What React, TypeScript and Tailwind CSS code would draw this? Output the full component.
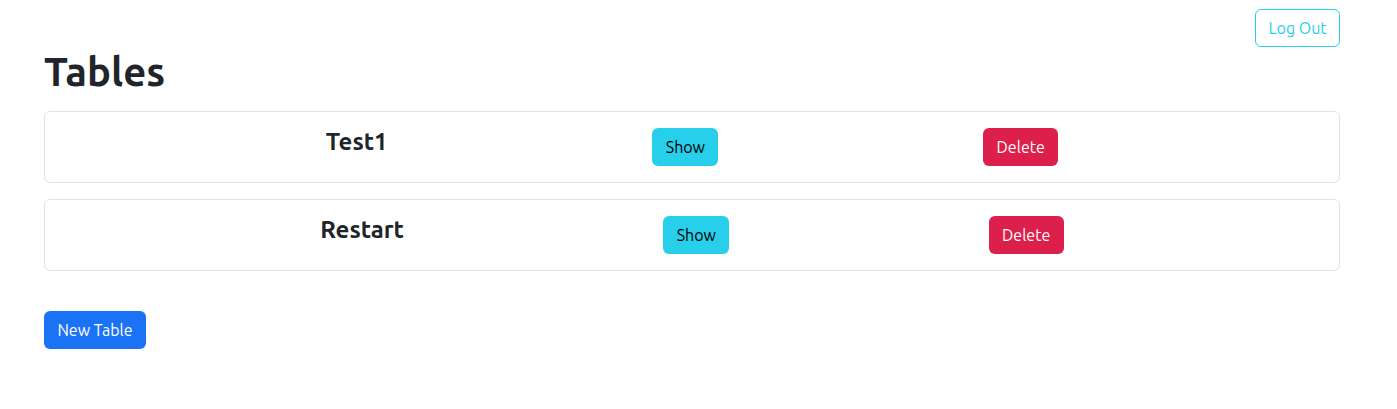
const tables = [{ name: "Test1" }, { name: "Restart" }];

export default function App() {
  return (
    <div className="min-h-[409px] bg-white text-[#212529] font-['Ubuntu','Noto_Sans',sans-serif] pl-[44px] pr-[57px]">
      {/* Top bar */}
      <div className="flex justify-end pt-[9px] pb-[8px]">
        <button className="h-[38px] w-[85px] rounded-md border border-[#27cfea] text-[#27cfea] text-base">
          Log Out
        </button>
      </div>

      <h1 className="text-[40px] leading-[34px] font-semibold mb-[22px]">Tables</h1>

      <div className="flex flex-col gap-4">
        {tables.map((t) => (
          <div
            key={t.name}
            className="flex items-start justify-evenly border border-[#dee2e6] rounded-md p-4"
          >
            <h4 className="text-2xl leading-[28.8px] font-semibold mb-2">{t.name}</h4>
            <button className="h-[38px] w-[66px] rounded-md bg-[#27cfea] text-black text-base">
              Show
            </button>
            <button className="h-[38px] w-[75px] rounded-md bg-[#dc1f4b] text-white text-base">
              Delete
            </button>
          </div>
        ))}
      </div>

      <button className="mt-10 h-[38px] w-[102px] rounded-md bg-[#1a73f5] text-white text-base">
        New Table
      </button>
    </div>
  );
}
